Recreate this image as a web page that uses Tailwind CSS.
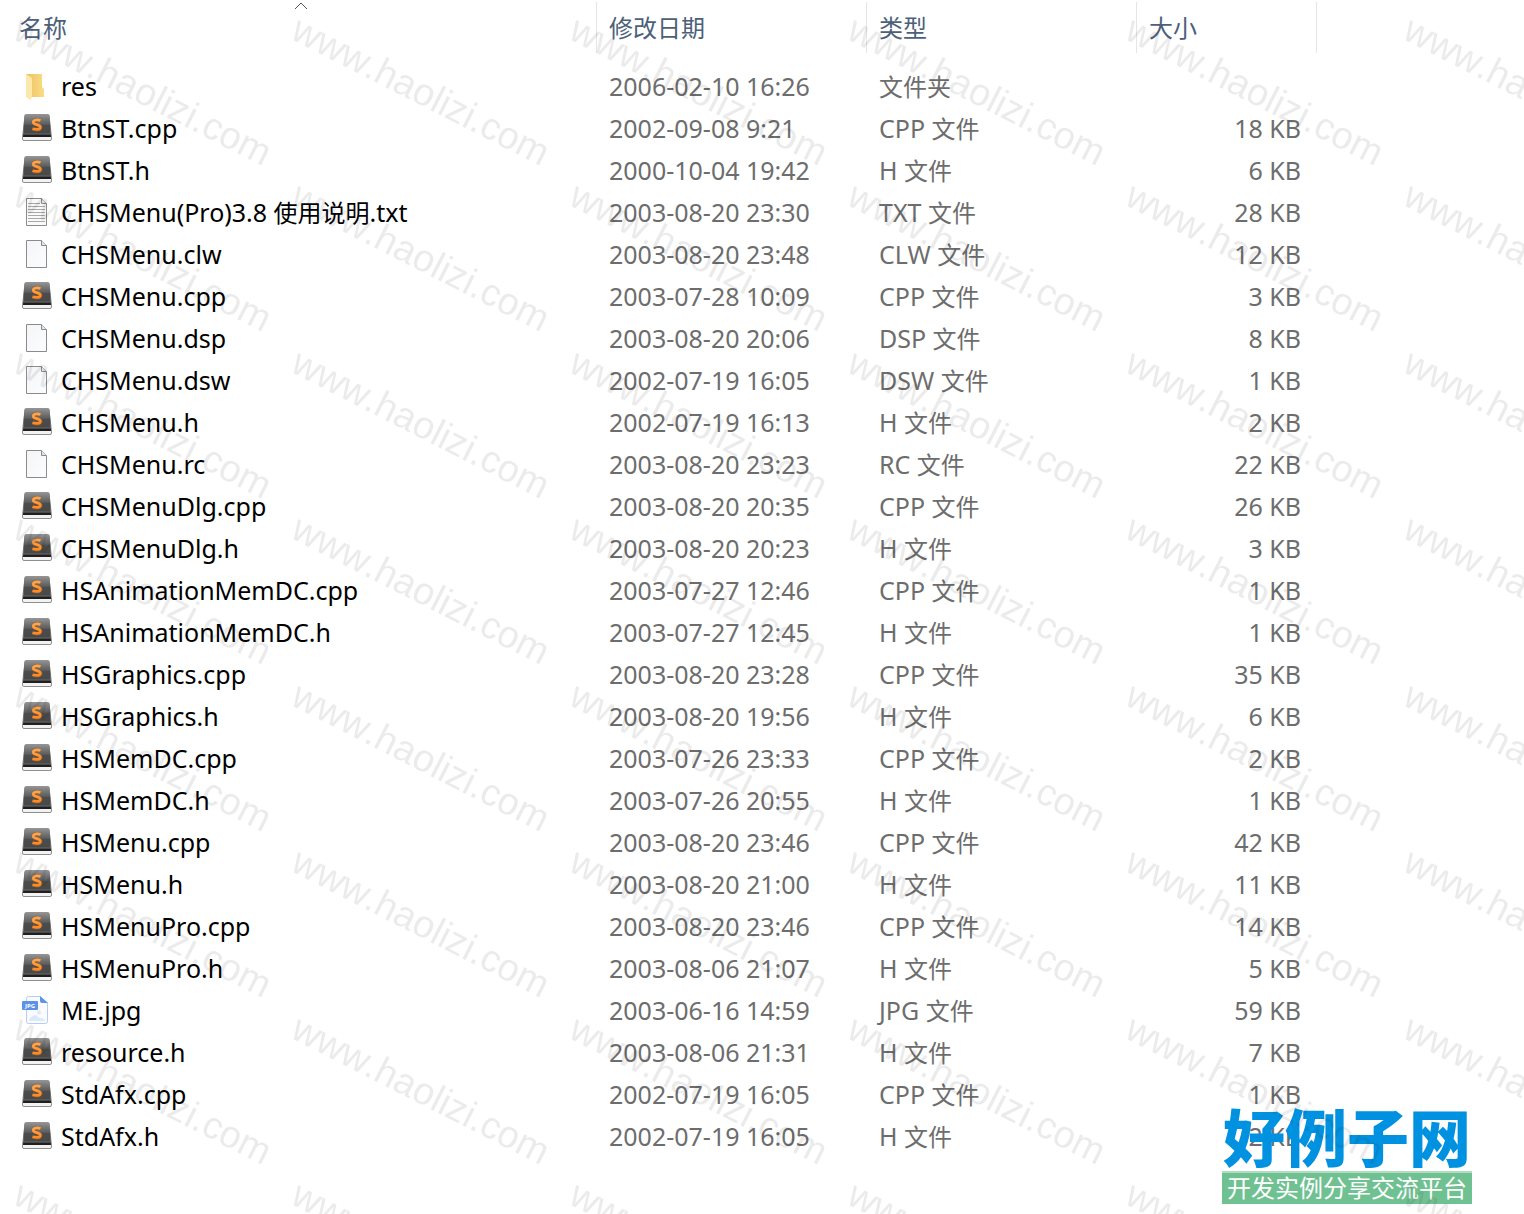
<!DOCTYPE html>
<html lang="zh-CN">
<head>
  <meta charset="UTF-8">
  <meta name="viewport" content="width=device-width, initial-scale=1.0">
  <title>CHSMenu</title>
  <script src="https://cdn.jsdelivr.net/npm/@tailwindcss/browser@4"></script>
</head>
<body class="bg-white font-['Noto_Sans','Noto_Sans_CJK_SC',sans-serif]">
  <!-- icons shared by the rows -->
  <svg class="absolute size-0" aria-hidden="true">
    <defs>
      <linearGradient id="key" x1="0" y1="0" x2="0" y2="1">
        <stop offset="0" stop-color="#969696"/>
        <stop offset=".45" stop-color="#5c5c5c"/>
        <stop offset=".5" stop-color="#4c4c4c"/>
        <stop offset="1" stop-color="#474747"/>
      </linearGradient>
      <linearGradient id="letter" x1="0" y1="0" x2="0" y2="1">
        <stop offset="0" stop-color="#ffa64d"/>
        <stop offset="1" stop-color="#ff8a1f"/>
      </linearGradient>
      <linearGradient id="folder-back" x1="0" y1="0" x2="1" y2="0">
        <stop offset="0" stop-color="#ebc164"/>
        <stop offset="1" stop-color="#fbdc83"/>
      </linearGradient>
      <linearGradient id="sheet" x1="0" y1="0" x2="1" y2="1">
        <stop offset="0" stop-color="#f3f5f6"/>
        <stop offset="1" stop-color="#fcfdfe"/>
      </linearGradient>
    </defs>
    <symbol id="icon-folder" viewBox="0 0 32 32">
      <path d="M5 3h16v13l2 2v8H10L5 6z" fill="url(#folder-back)"/>
      <path d="M5 3l6 4v17l-1 5.500L5 26z" fill="#fde8ab"/>
    </symbol>
    <symbol id="icon-sublime" viewBox="0 0 32 32">
      <path d="M5 2h22q1 0 1 1l2.500 21v2q0 1.500-1.500 1.500H3q-1.500 0-1.500-1.500v-2L4 3q0-1 1-1z" fill="#f2f2f2" stroke="#8f8f8f"/>
      <path d="M5.500 1h21q2 0 2.200 2L30 24H2L3.300 3q.2-2 2.200-2z" fill="url(#key)"/>
      <path d="M2.500 21.500h27L30 24H2z" fill="#1f1f1f"/>
      <path d="M2.500 21h27" stroke="#777777" stroke-width=".7"/>
      <path d="M19.500 7.500C17 6.600 12.500 6.500 12.300 9.200c-.1 2.800 7.200 2 7.100 4.900-.1 2.900-4.700 2.600-7.900 1.600" fill="none" stroke="#a0622e" stroke-width="4.500" opacity=".45"/>
      <path d="M19.500 7.500C17 6.600 12.500 6.500 12.300 9.200c-.1 2.800 7.200 2 7.100 4.900-.1 2.900-4.700 2.600-7.900 1.600" fill="none" stroke="url(#letter)" stroke-width="2.700"/>
    </symbol>
    <symbol id="icon-file" viewBox="0 0 32 32">
      <path d="M5.500 1.500h15l5 5v22h-20z" fill="url(#sheet)" stroke="#8b8b8b"/>
      <path d="M20.500 1.500v5h5" fill="#e4e4e4" stroke="#8b8b8b"/>
    </symbol>
    <symbol id="icon-text" viewBox="0 0 32 32">
      <path d="M5.500 1.500h15l5 5v22h-20z" fill="#fafafa" stroke="#8b8b8b"/>
      <path d="M20.500 1.500v5h5" fill="#e4e4e4" stroke="#8b8b8b"/>
      <path d="M7 6.500h12M7 9.500h17M7 12.500h17M7 15.500h17M7 18.500h17M7 21.500h17M7 24.500h17" stroke="#a8a8a8"/>
    </symbol>
    <symbol id="icon-jpg" viewBox="0 0 32 32">
      <path d="M5.500 3.500q0-2 2-2H19l7.500 6.500v18.500q0 2-2 2h-17q-2 0-2-2z" fill="#f9fbff" stroke="#b3cdf5"/>
      <path d="M19 1v5q0 2 2 2h6z" fill="#5c93e5"/>
      <circle cx="18" cy="17.500" r="2" fill="#dce8fb"/>
      <path d="M8 26c0-3 3-5 6-6 2 0 3 3 5 3s5 1 5 3z" fill="#dce8fb"/>
      <rect x="1" y="6" width="16" height="9" rx="1" fill="#5c93e5"/>
      <text x="9" y="13" text-anchor="middle" font-size="6" font-weight="bold" fill="#ffffff">JPG</text>
    </symbol>
  </svg>

  <main class="relative min-h-screen overflow-hidden">
    <table class="w-full table-fixed text-left">
      <colgroup>
        <col class="w-[597px]">
        <col class="w-[270px]">
        <col class="w-[270px]">
        <col class="w-[180px]">
        <col>
      </colgroup>
      <thead class="text-2xl text-[#4c607a]">
        <tr class="h-[66px] align-top">
          <th class="relative p-0 pt-0.5 font-normal">
            <div class="flex h-[51px] items-center border-r border-[#e5e5e5] pl-[19px]"><button type="button">名称</button></div>
            <svg class="absolute top-0.5 left-[294px] h-2 w-[14px]" viewBox="0 0 14 8" aria-hidden="true"><path d="M1 7l6-6 6 6" fill="none" stroke="#555555"/></svg>
          </th>
          <th class="p-0 pt-0.5 font-normal">
            <div class="flex h-[51px] items-center border-r border-[#e5e5e5] pl-3"><button type="button">修改日期</button></div>
          </th>
          <th class="p-0 pt-0.5 font-normal">
            <div class="flex h-[51px] items-center border-r border-[#e5e5e5] pl-3"><button type="button">类型</button></div>
          </th>
          <th class="p-0 pt-0.5 font-normal">
            <div class="flex h-[51px] items-center border-r border-[#e5e5e5] pl-3"><button type="button">大小</button></div>
          </th>
          <td></td>
        </tr>
      </thead>
      <tbody id="files" class="text-[25px] leading-[40px] whitespace-nowrap text-[#6d6d6d]"></tbody>
    </table>

    <div class="absolute right-[52px] bottom-[10px] w-[250px] font-['Noto_Sans_CJK_SC',sans-serif]">
      <div class="pb-1 text-center text-[62px] leading-[64px] font-black text-[#0092e0]">好例子网</div>
      <div class="border-t-2 border-[#b0dcc0] bg-[#70c191] pb-1 text-center text-2xl leading-[27px] text-white">开发实例分享交流平台</div>
    </div>

    <svg class="pointer-events-none absolute inset-0 h-full w-full" aria-hidden="true">
      <pattern id="watermark" width="278" height="333" patternUnits="userSpaceOnUse">
        <g class="font-['Liberation_Sans',Arial,sans-serif] text-[38px] [font-kerning:none]" fill="#000000" fill-opacity=".08">
          <text transform="translate(11 38) rotate(27)">www.haolizi.com</text>
          <text transform="translate(11 204) rotate(27)">www.haolizi.com</text>
        </g>
      </pattern>
      <rect width="100%" height="100%" fill="url(#watermark)"/>
    </svg>
  </main>

  <script>
    // name, modified, type, size, icon
    const files = [
      ['res', '2006-02-10 16:26', '文件夹', '', 'folder'],
      ['BtnST.cpp', '2002-09-08 9:21', 'CPP 文件', '18 KB', 'sublime'],
      ['BtnST.h', '2000-10-04 19:42', 'H 文件', '6 KB', 'sublime'],
      ['CHSMenu(Pro)3.8 使用说明.txt', '2003-08-20 23:30', 'TXT 文件', '28 KB', 'text'],
      ['CHSMenu.clw', '2003-08-20 23:48', 'CLW 文件', '12 KB', 'file'],
      ['CHSMenu.cpp', '2003-07-28 10:09', 'CPP 文件', '3 KB', 'sublime'],
      ['CHSMenu.dsp', '2003-08-20 20:06', 'DSP 文件', '8 KB', 'file'],
      ['CHSMenu.dsw', '2002-07-19 16:05', 'DSW 文件', '1 KB', 'file'],
      ['CHSMenu.h', '2002-07-19 16:13', 'H 文件', '2 KB', 'sublime'],
      ['CHSMenu.rc', '2003-08-20 23:23', 'RC 文件', '22 KB', 'file'],
      ['CHSMenuDlg.cpp', '2003-08-20 20:35', 'CPP 文件', '26 KB', 'sublime'],
      ['CHSMenuDlg.h', '2003-08-20 20:23', 'H 文件', '3 KB', 'sublime'],
      ['HSAnimationMemDC.cpp', '2003-07-27 12:46', 'CPP 文件', '1 KB', 'sublime'],
      ['HSAnimationMemDC.h', '2003-07-27 12:45', 'H 文件', '1 KB', 'sublime'],
      ['HSGraphics.cpp', '2003-08-20 23:28', 'CPP 文件', '35 KB', 'sublime'],
      ['HSGraphics.h', '2003-08-20 19:56', 'H 文件', '6 KB', 'sublime'],
      ['HSMemDC.cpp', '2003-07-26 23:33', 'CPP 文件', '2 KB', 'sublime'],
      ['HSMemDC.h', '2003-07-26 20:55', 'H 文件', '1 KB', 'sublime'],
      ['HSMenu.cpp', '2003-08-20 23:46', 'CPP 文件', '42 KB', 'sublime'],
      ['HSMenu.h', '2003-08-20 21:00', 'H 文件', '11 KB', 'sublime'],
      ['HSMenuPro.cpp', '2003-08-20 23:46', 'CPP 文件', '14 KB', 'sublime'],
      ['HSMenuPro.h', '2003-08-06 21:07', 'H 文件', '5 KB', 'sublime'],
      ['ME.jpg', '2003-06-16 14:59', 'JPG 文件', '59 KB', 'jpg'],
      ['resource.h', '2003-08-06 21:31', 'H 文件', '7 KB', 'sublime'],
      ['StdAfx.cpp', '2002-07-19 16:05', 'CPP 文件', '1 KB', 'sublime'],
      ['StdAfx.h', '2002-07-19 16:05', 'H 文件', '2 KB', 'sublime']
    ];
    // Chinese runs are set a little smaller than the Latin text
    const cjk = text => text.replace(/[\u4e00-\u9fff]+/g, '<span class="text-2xl leading-none">$&</span>');
    document.getElementById('files').innerHTML = files.map(([name, date, type, size, icon]) => `
      <tr class="h-[42px]">
        <td class="p-0 pl-[21px] text-black">
          <div class="flex h-[42px] items-center gap-2">
            <svg class="size-8 shrink-0"><use href="#icon-${icon}"/></svg>
            <span class="pb-0.5">${cjk(name)}</span>
          </div>
        </td>
        <td class="p-0 pb-0.5 pl-3">${date}</td>
        <td class="p-0 pb-0.5 pl-3">${cjk(type)}</td>
        <td class="p-0 pr-4 pb-0.5 text-right">${size}</td>
        <td></td>
      </tr>`).join('');
  </script>
</body>
</html>
